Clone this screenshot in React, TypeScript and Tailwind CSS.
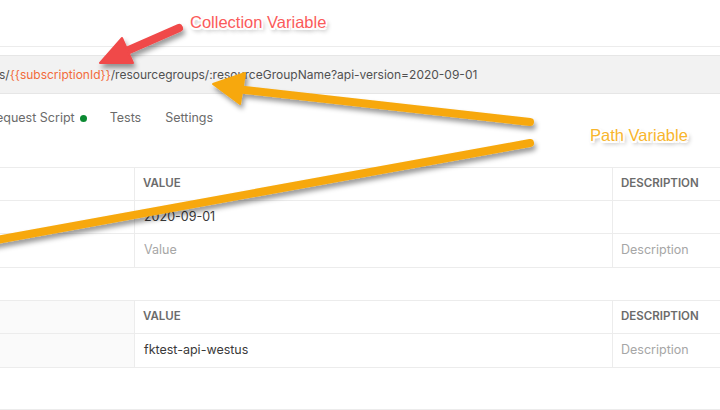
import { ReactNode } from 'react';

type Row = { value: string; desc: string; placeholder?: boolean };

function ParamTable({ rows, shadedKey }: { rows: Row[]; shadedKey?: boolean }) {
    const keyBg = shadedKey ? 'bg-[#fafafa]' : 'bg-white';
    return (
        <div className="w-full border-t border-b border-[#ececec]">
            {/* header */}
            <div className="flex h-[33px] border-b border-[#ececec]">
                <div className={`w-[135px] shrink-0 border-r border-[#ececec] ${keyBg}`} />
                <div className="w-[478px] shrink-0 border-r border-[#ececec] px-[8px] flex items-center text-[11.5px] font-semibold text-[#6b6b6b]">VALUE</div>
                <div className="flex-1 px-[8px] flex items-center text-[11.5px] font-semibold text-[#6b6b6b]">DESCRIPTION</div>
            </div>
            {rows.map((row, i) => (
                <div key={i} className={`flex h-[33px] ${i < rows.length - 1 ? 'border-b border-[#ececec]' : ''}`}>
                    <div className={`w-[135px] shrink-0 border-r border-[#ececec] ${keyBg}`} />
                    <div className={`w-[478px] shrink-0 border-r border-[#ececec] px-[9px] flex items-center text-[12.5px] ${row.placeholder ? 'text-[#a6a6a6]' : 'text-[#3a3a3a]'}`}>{row.value}</div>
                    <div className="flex-1 px-[8px] flex items-center text-[12.5px] text-[#a6a6a6]">{row.desc}</div>
                </div>
            ))}
        </div>
    );
}

function Label({ children, className }: { children: ReactNode; className: string }) {
    return (
        <span
            className={`absolute text-[16.5px] leading-none whitespace-nowrap ${className}`}
            style={{
                fontFamily: '"Liberation Sans", Arial, sans-serif',
                textShadow: '-1.5px -1.5px 0 #fff, 1.5px -1.5px 0 #fff, -1.5px 1.5px 0 #fff, 1.5px 1.5px 0 #fff, 0 -1.5px 0 #fff, 0 1.5px 0 #fff, -1.5px 0 0 #fff, 1.5px 0 0 #fff, 2px 3px 4px rgba(0,0,0,0.45)',
            }}
        >
            {children}
        </span>
    );
}

export default function App() {
    return (
        <main className="relative w-[720px] h-[410px] overflow-hidden bg-white" style={{ fontFamily: 'Inter, "Noto Sans", sans-serif' }}>
            {/* top area */}
            <div className="h-[47px] border-b border-[#ececec]" />

            {/* url bar */}
            <div className="mt-[8px] h-[39px] bg-[#f2f2f2] border-y border-[#e6e6e6] flex items-center text-[12px] text-[#505050] whitespace-nowrap">
                <span className="-ml-[1px]">s/</span>
                <span className="text-[#f26b3a]">{'{{subscriptionId}}'}</span>
                <span>/resourcegroups/:resourceGroupName?api-version=2020-09-01</span>
            </div>

            {/* tabs */}
            <div className="h-[48px] flex items-center text-[12.5px] text-[#6b6b6b] whitespace-nowrap">
                <span className="-ml-[4px] flex items-center gap-[5px]">
                    equest Script
                    <span className="w-[7px] h-[7px] rounded-full bg-[#0b8a32]" />
                </span>
                <span className="ml-[23px]">Tests</span>
                <span className="ml-[24px]">Settings</span>
            </div>

            {/* query params */}
            <div className="mt-[25px]">
                <ParamTable
                    rows={[
                        { value: '2020-09-01', desc: '' },
                        { value: 'Value', desc: 'Description', placeholder: true },
                    ]}
                />
            </div>

            {/* path variables */}
            <div className="mt-[32px]">
                <ParamTable shadedKey rows={[{ value: 'fktest-api-westus', desc: 'Description' }]} />
            </div>

            <div className="mt-[41px] border-t border-[#ececec]" />

            {/* annotations */}
            <svg className="absolute inset-0 pointer-events-none" width="720" height="410" viewBox="0 0 720 410">
                <defs>
                    <filter id="sh" x="-20%" y="-20%" width="140%" height="140%">
                        <feDropShadow dx="2" dy="4" stdDeviation="2.5" floodColor="#000" floodOpacity="0.4" />
                    </filter>
                </defs>
                <g filter="url(#sh)">
                    {/* long orange line going off the left edge */}
                    <line x1="530" y1="143" x2="-20" y2="243" stroke="#f7a80b" strokeWidth="8" strokeLinecap="round" />
                    {/* orange arrow to :resourceGroupName */}
                    <line x1="530" y1="122" x2="236" y2="89" stroke="#f7a80b" strokeWidth="8" strokeLinecap="round" />
                    <polygon points="213,84 245,73 240,104" fill="#f7a80b" strokeLinejoin="round" stroke="#f7a80b" strokeWidth="2" />
                    {/* red arrow to {{subscriptionId}} */}
                    <line x1="179" y1="28" x2="122" y2="53" stroke="#f04848" strokeWidth="8" strokeLinecap="round" />
                    <polygon points="100,63 122,38 133,63" fill="#f04848" strokeLinejoin="round" stroke="#f04848" strokeWidth="2" />
                </g>
            </svg>

            <Label className="left-[190px] top-[14px] text-[#fb5a5a]">Collection Variable</Label>
            <Label className="left-[590px] top-[127px] text-[#f8b52c]">Path Variable</Label>
        </main>
    );
}
